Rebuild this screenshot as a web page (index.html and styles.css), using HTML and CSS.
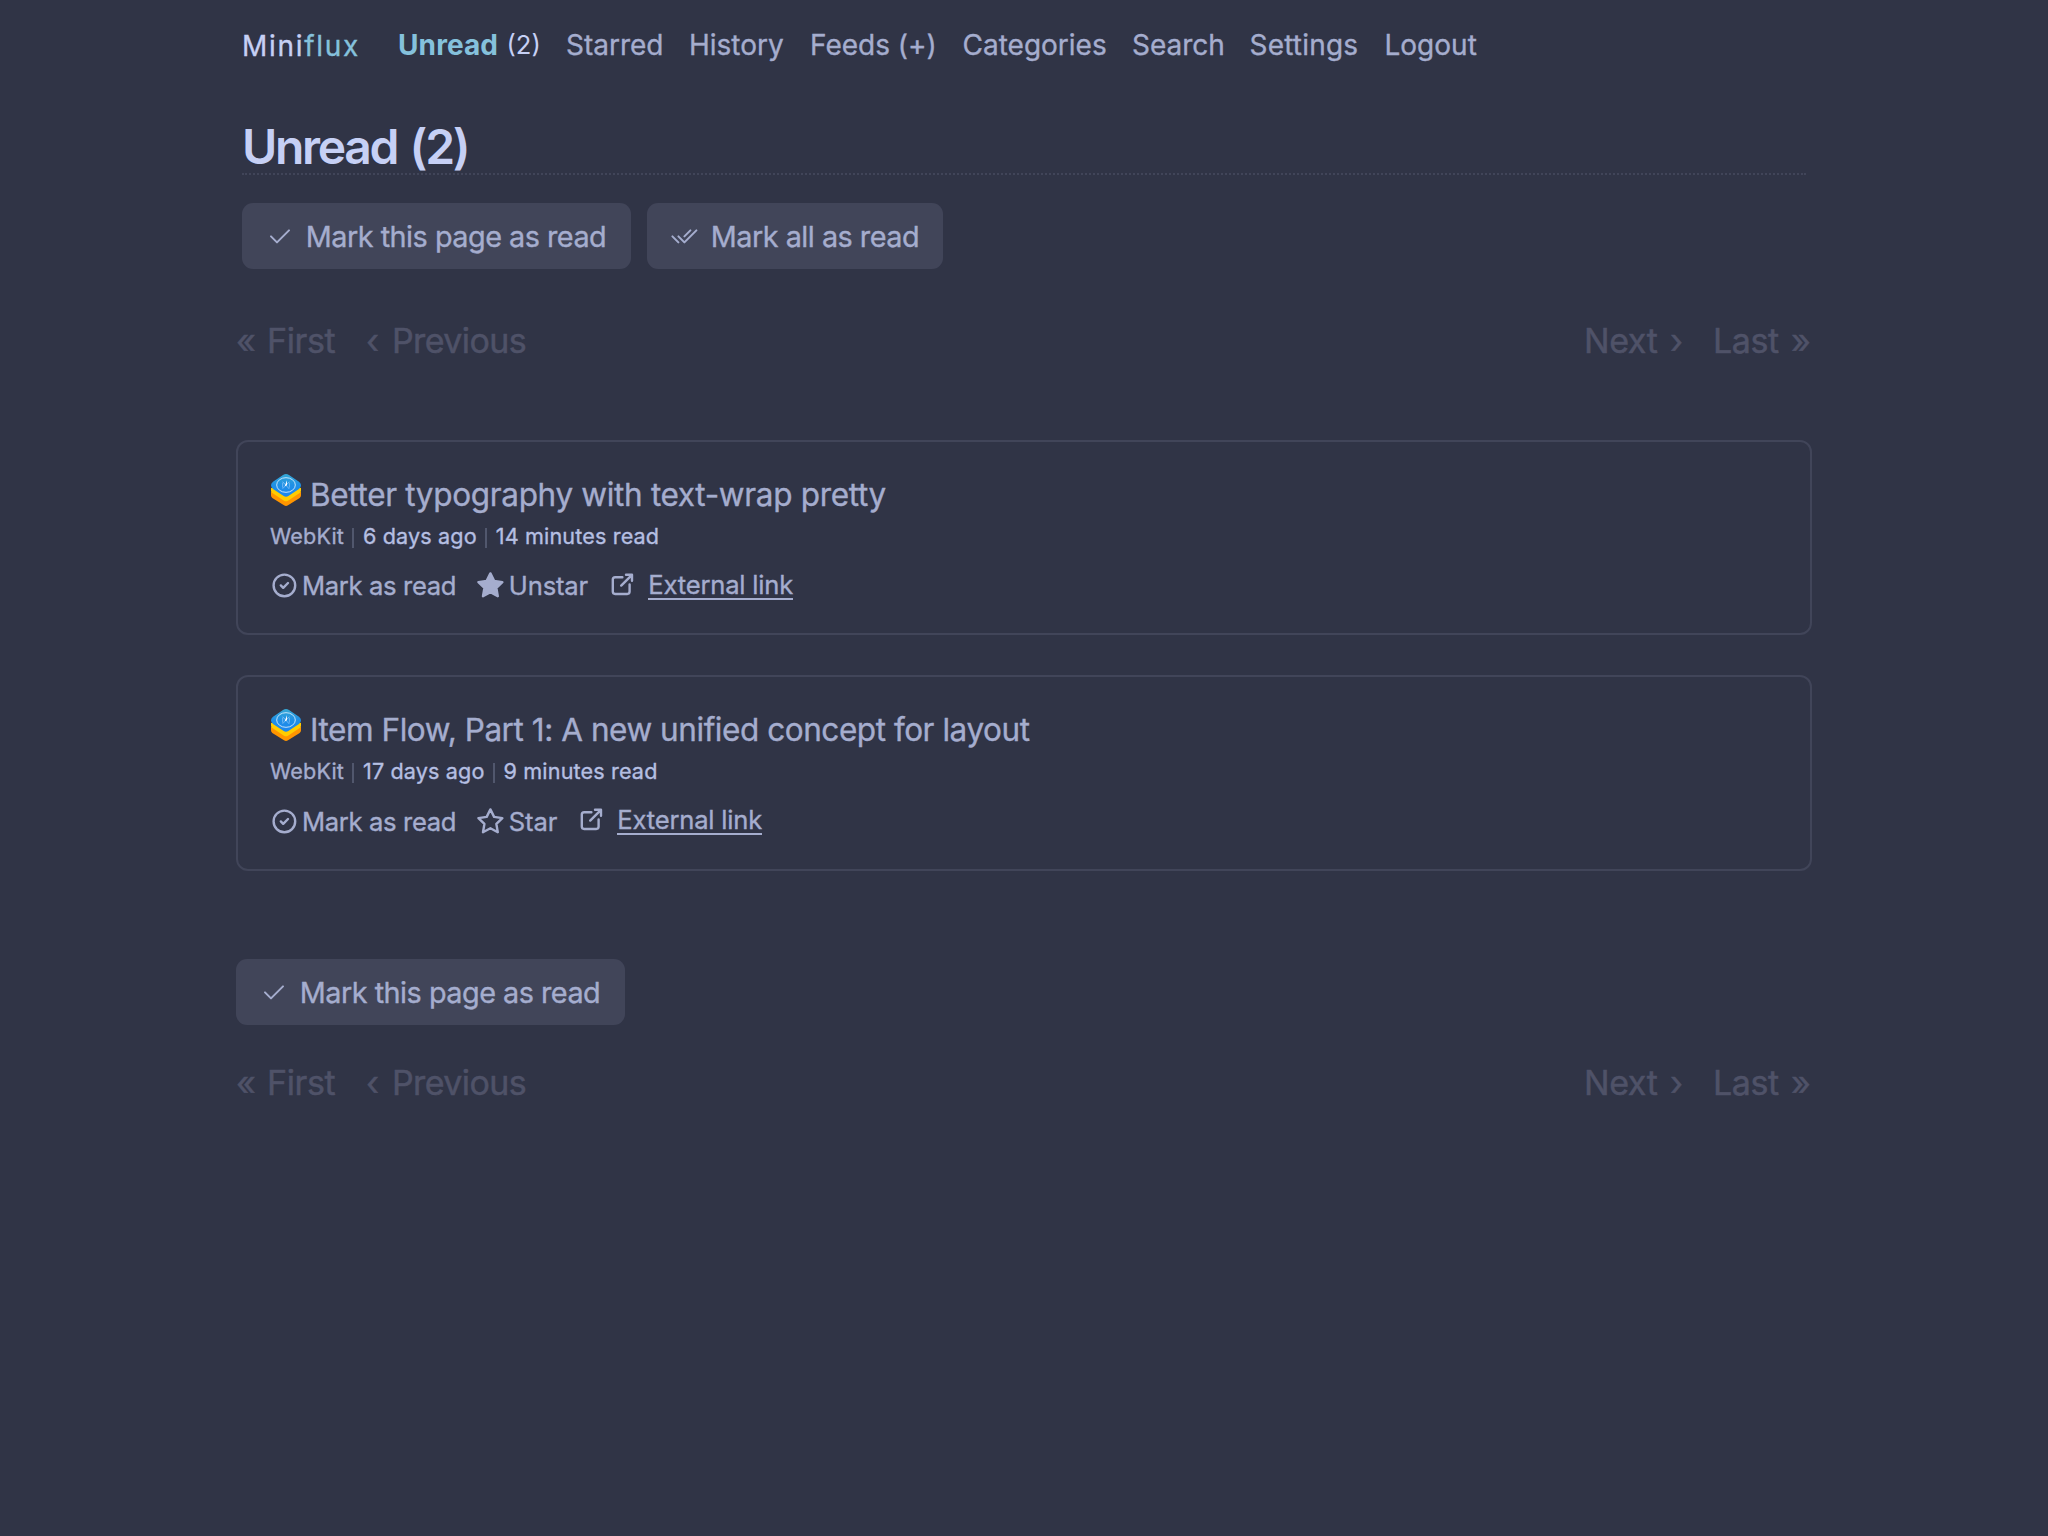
FILE: index.html
```html
<!DOCTYPE html>
<html lang="en">
<head>
<meta charset="utf-8">
<title>Unread (2) - Miniflux</title>
<link rel="stylesheet" href="styles.css">
</head>
<body>
<svg class="sprite" aria-hidden="true">
  <defs>
    <linearGradient id="layer-blue" x1="0" y1="0" x2="0" y2="1"><stop offset="0" stop-color="#36a8d4"/><stop offset=".5" stop-color="#1f8fe6"/><stop offset="1" stop-color="#1b86ee"/></linearGradient>
  </defs>
  <symbol id="icon-check" viewBox="0 0 24 24"><path d="M5 12l5 5l10-10"/></symbol>
  <symbol id="icon-checks" viewBox="0 0 24 24"><path d="M7 12l5 5l10-10M2 12l5 5m5-5l5-5"/></symbol>
  <symbol id="icon-read" viewBox="0 0 24 24"><circle cx="12" cy="12" r="9"/><path d="M9 12l2 2l4-4"/></symbol>
  <symbol id="icon-star" viewBox="0 0 24 24"><path d="M12 17.75l-6.172 3.245l1.179-6.873l-5-4.867l6.9-1l3.086-6.253l3.086 6.253l6.9 1l-5 4.867l1.179 6.873z"/></symbol>
  <symbol id="icon-external" viewBox="0 0 24 24"><path d="M12 6H6a2 2 0 0 0-2 2v10a2 2 0 0 0 2 2h10a2 2 0 0 0 2-2v-6M11 13l9-9M15 4h5v5"/></symbol>
  <symbol id="favicon" viewBox="0 0 96 96">
    <path fill="#ff9500" d="M3 54L48 40L93 54V64Q93 69 89 72L54 94Q48 98 42 94L7 72Q3 69 3 64Z"/>
    <path fill="#ffcc00" d="M3 42L48 30L93 42V50Q93 54 89 57L54 80Q48 84 42 80L7 57Q3 54 3 50Z"/>
    <path fill="url(#layer-blue)" d="M39 3Q48-3 57 3L87 23Q93 28 93 34Q93 41 87 45L55 66Q48 71 41 66L9 45Q3 41 3 34Q3 28 9 23Z"/>
    <ellipse cx="48" cy="33" rx="28" ry="22" fill="none" stroke="#d9efff" stroke-width="2.6"/>
    <path d="M38 23l20 22M58 23L38 44M38 26v15M58 26v15" stroke="#a9d4fb" stroke-width="1.8" fill="none"/>
    <path d="M51 19v15l-7 3z" fill="#fff"/>
  </symbol>
</svg>
<div class="page">
  <header class="header">
    <a class="logo">Mini<span>flux</span></a>
    <ul class="nav">
      <li class="n-unread"><b>Unread</b><span class="count">(2)</span></li>
      <li class="n-starred">Starred</li>
      <li class="n-history">History</li>
      <li class="n-feeds">Feeds (+)</li>
      <li class="n-categories">Categories</li>
      <li class="n-search">Search</li>
      <li class="n-settings">Settings</li>
      <li>Logout</li>
    </ul>
  </header>
  <h1>Unread (2)</h1>
  <div class="buttons">
    <button class="btn btn-page"><svg class="icon"><use href="#icon-check"/></svg><span>Mark this page as read</span></button>
    <button class="btn btn-all"><svg class="icon"><use href="#icon-checks"/></svg><span>Mark all as read</span></button>
  </div>
  <nav class="pagination">
    <span class="first"><i>«</i><span>First</span></span>
    <span class="prev"><i>‹</i><span>Previous</span></span>
    <span class="next"><span>Next</span><i>›</i></span>
    <span class="last"><span>Last</span><i>»</i></span>
  </nav>
  <main class="items">
    <article class="item">
      <h2><svg class="favicon"><use href="#favicon"/></svg><span class="title-a">Better typography with text-wrap pretty</span></h2>
      <ul class="meta"><li class="feed">WebKit</li><li><span>6 days ago</span></li><li><span>14 minutes read</span></li></ul>
      <ul class="actions">
        <li class="a-read"><svg class="icon"><use href="#icon-read"/></svg><span>Mark as read</span></li>
        <li class="a-unstar"><svg class="icon filled"><use href="#icon-star"/></svg><span>Unstar</span></li>
        <li class="a-ext"><svg class="icon"><use href="#icon-external"/></svg><span class="link">External link</span></li>
      </ul>
    </article>
    <article class="item">
      <h2><svg class="favicon"><use href="#favicon"/></svg><span class="title-b">Item Flow, Part 1: A new unified concept for layout</span></h2>
      <ul class="meta"><li class="feed">WebKit</li><li><span>17 days ago</span></li><li><span>9 minutes read</span></li></ul>
      <ul class="actions second">
        <li class="a-read"><svg class="icon"><use href="#icon-read"/></svg><span>Mark as read</span></li>
        <li class="a-star"><svg class="icon"><use href="#icon-star"/></svg><span>Star</span></li>
        <li class="a-ext"><svg class="icon"><use href="#icon-external"/></svg><span class="link">External link</span></li>
      </ul>
    </article>
  </main>
  <div class="buttons bottom">
    <button class="btn btn-page"><svg class="icon"><use href="#icon-check"/></svg><span>Mark this page as read</span></button>
  </div>
  <nav class="pagination lower">
    <span class="first"><i>«</i><span>First</span></span>
    <span class="prev"><i>‹</i><span>Previous</span></span>
    <span class="next"><span>Next</span><i>›</i></span>
    <span class="last"><span>Last</span><i>»</i></span>
  </nav>
</div>
</body>
</html>
```
FILE: styles.css
```css
* { box-sizing: border-box; }
body {
  margin: 0;
  background: #303446;
  color: #c6d0f5;
  font-family: Inter, "Liberation Sans", sans-serif;
  font-weight: 400;
  -webkit-text-stroke: 0.35px currentColor;
}
ul { list-style: none; margin: 0; padding: 0; }
.sprite { position: absolute; width: 0; height: 0; }
.page { width: 1576px; margin-left: 236px; padding-top: 24px; }
.icon {
  width: 28.8px; height: 28.8px; flex: none;
  fill: none; stroke: currentColor; stroke-width: 2;
  stroke-linecap: round; stroke-linejoin: round;
}
.icon.filled { fill: currentColor; }

.header { display: flex; height: 42px; line-height: 42px; padding-left: 6px; font-size: 28px; white-space: nowrap; }
.logo { width: 156px; padding-top: 1px; letter-spacing: 1.7px; }
.logo span { color: #85c1dc; }
.nav { display: flex; color: #a5adce; }
.n-unread { display: flex; width: 168px; color: #c6d0f5; }
.n-unread b { width: 108.5px; color: #85c1dc; font-weight: 700; letter-spacing: 0.1px; -webkit-text-stroke: 0; }
.count { font-size: 25.6px; -webkit-text-stroke: 0; }
.n-starred { width: 123px; }
.n-history { width: 121px; }
.n-feeds { width: 152.5px; }
.n-categories { width: 169.5px; }
.n-search { width: 117.5px; }
.n-settings { width: 135px; letter-spacing: 0.2px; }

h1 {
  height: 59px; margin: 50px 6px 28px; border-bottom: 2px dotted #414559;
  font-size: 48px; line-height: 61px; font-weight: 600; white-space: nowrap;
  letter-spacing: -2.3px; word-spacing: 2.5px; -webkit-text-stroke: 0;
}
.buttons { display: flex; gap: 16px; padding-left: 6px; }
.buttons.bottom { padding-left: 0; }
.btn {
  display: flex; align-items: center; height: 66px; padding: 0 0 0 23px; border: 0; border-radius: 11px;
  background: #414559; color: #a5adce; font: 400 28.8px/66px Inter, "Liberation Sans", sans-serif; white-space: nowrap;
  letter-spacing: -0.5px;
}
.btn .icon { stroke-width: 1.7; margin-right: 12px; }
.btn span { padding-top: 1px; }
.btn-page { width: 389px; }
.btn-all { width: 296px; }

.pagination { display: flex; height: 50px; margin-top: 47px; color: #4f5268; font-size: 34px; line-height: 50px; letter-spacing: -0.4px; white-space: nowrap; -webkit-text-stroke-width: 0.5px; }
.pagination.lower { margin-top: 33px; }
.pagination i { font-style: normal; }
.pagination > span { display: flex; }
.first { width: 130px; }
.first i { width: 31px; }
.prev i { width: 26px; }
.prev span { letter-spacing: -0.6px; }
.next { margin-left: auto; width: 129px; }
.next span { width: 86px; }
.last { width: 99px; }
.last span { width: 78px; }

.items { display: grid; gap: 40px; margin-top: 74px; }
.item { height: 195px; border: 2px solid #414559; border-radius: 12px; padding: 32px 0 0 32px; color: #a5adce; white-space: nowrap; }
.item + .item { height: 196px; }
h2 { display: flex; margin: 0; height: 44px; font-size: 31.5px; line-height: 42px; font-weight: 400; }
.title-a { letter-spacing: -0.33px; }
.title-b { letter-spacing: -0.45px; }
.favicon { width: 32px; height: 32px; margin-right: 8px; }
.meta { display: flex; height: 36px; font-size: 21.6px; line-height: 36px; letter-spacing: 0.14px; }
.meta li + li { display: flex; align-items: center; color: #b5bfe2; }
.meta li + li::before { content: ""; width: 2px; height: 20px; margin: 3px 9px 0 8px; background: #51576d; }
.actions { display: flex; margin-top: 16px; font-size: 25.6px; line-height: 32px; letter-spacing: -0.35px; }
.actions.second { margin-top: 17px; }
.actions li { display: flex; height: 32px; }
.actions .icon { margin-top: 0.6px; }
.a-read { width: 206px; }
.a-read .icon { margin-left: -0.4px; margin-right: 3.6px; }
.a-unstar { width: 131.5px; }
.a-star { width: 100.5px; }
.a-unstar .icon, .a-star .icon { margin-right: 4px; }
.a-unstar, .a-star { letter-spacing: -0.15px; }
.a-ext { margin-top: -1px; }
.second .a-ext { margin-top: -2px; }
.a-ext .icon { margin-right: 12px; }
.link { height: 31px; border-bottom: 2px solid #a5adce; letter-spacing: -0.2px; }
.bottom { margin-top: 88px; }
```
